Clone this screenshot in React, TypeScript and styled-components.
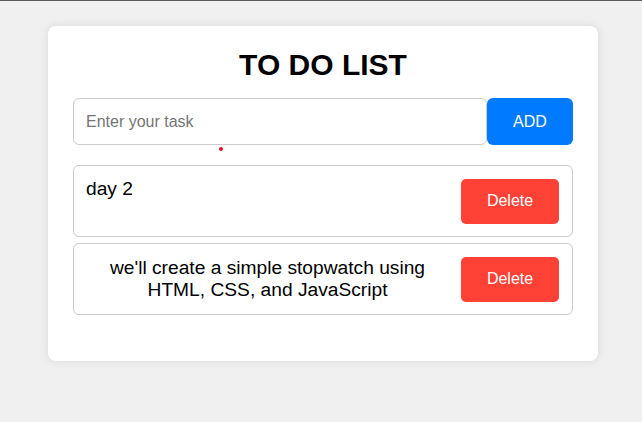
import React from "react";
import styled, { createGlobalStyle } from "styled-components";

const Global = createGlobalStyle`
  html, body { margin: 0; padding: 0; }
  body {
    background: #f0f0f0;
    font-family: "Liberation Sans", Arial, sans-serif;
    border-top: 1px solid #5a5a5a;
    min-height: 421px;
  }
`;

const Page = styled.div`
  padding: 25px 44px 0 48px;
`;

const Card = styled.div`
  position: relative;
  width: 550px;
  box-sizing: border-box;
  background: #fff;
  border-radius: 8px;
  box-shadow: 0 0 10px rgba(0, 0, 0, 0.1);
  padding: 22px 25px 46px;
`;

const Title = styled.h1`
  margin: 0 0 16px;
  font-size: 30px;
  line-height: 34px;
  font-weight: bold;
  text-align: center;
  color: #000;
`;

const InputRow = styled.div`
  display: flex;
  height: 47px;
`;

const TaskInput = styled.input`
  width: 414px;
  box-sizing: border-box;
  border: 1px solid #ccc;
  border-radius: 6px;
  padding: 0 12px;
  font-family: "Liberation Sans", Arial, sans-serif;
  font-size: 16px;
  outline: none;
  &::placeholder { color: #757575; }
`;

const AddButton = styled.button`
  width: 86px;
  border: none;
  border-radius: 6px;
  background: #007bff;
  color: #fff;
  font-family: "Liberation Sans", Arial, sans-serif;
  font-size: 16px;
`;

const Dot = styled.span`
  position: absolute;
  left: 171px;
  top: 121px;
  width: 4px;
  height: 4px;
  border-radius: 50%;
  background: #e0141e;
`;

const List = styled.ul`
  list-style: none;
  margin: 20px 0 0;
  padding: 0;
  display: flex;
  flex-direction: column;
  gap: 6px;
`;

const Item = styled.li`
  display: flex;
  align-items: center;
  box-sizing: border-box;
  height: 72px;
  border: 1px solid #ccc;
  border-radius: 6px;
  padding: 12px 13px 12px 12px;
`;

const ItemText = styled.span<{ $top?: boolean; $center?: boolean }>`
  flex: 1;
  margin-right: 12px;
  align-self: ${(p) => (p.$top ? "flex-start" : "center")};
  text-align: ${(p) => (p.$center ? "center" : "left")};
  font-size: 19.2px;
  line-height: 22px;
  color: #000;
`;

const DeleteButton = styled.button`
  width: 98px;
  height: 45px;
  border: none;
  border-radius: 5px;
  background: #ff4136;
  color: #fff;
  font-family: "Liberation Sans", Arial, sans-serif;
  font-size: 16px;
`;

export default function App() {
  return (
    <>
      <Global />
      <Page>
        <Card>
          <Title>TO DO LIST</Title>
          <InputRow>
            <TaskInput placeholder="Enter your task" />
            <AddButton>ADD</AddButton>
          </InputRow>
          <Dot />
          <List>
            <Item>
              <ItemText $top>day 2</ItemText>
              <DeleteButton>Delete</DeleteButton>
            </Item>
            <Item>
              <ItemText $center>
                we'll create a simple stopwatch using HTML, CSS, and JavaScript
              </ItemText>
              <DeleteButton>Delete</DeleteButton>
            </Item>
          </List>
        </Card>
      </Page>
    </>
  );
}
